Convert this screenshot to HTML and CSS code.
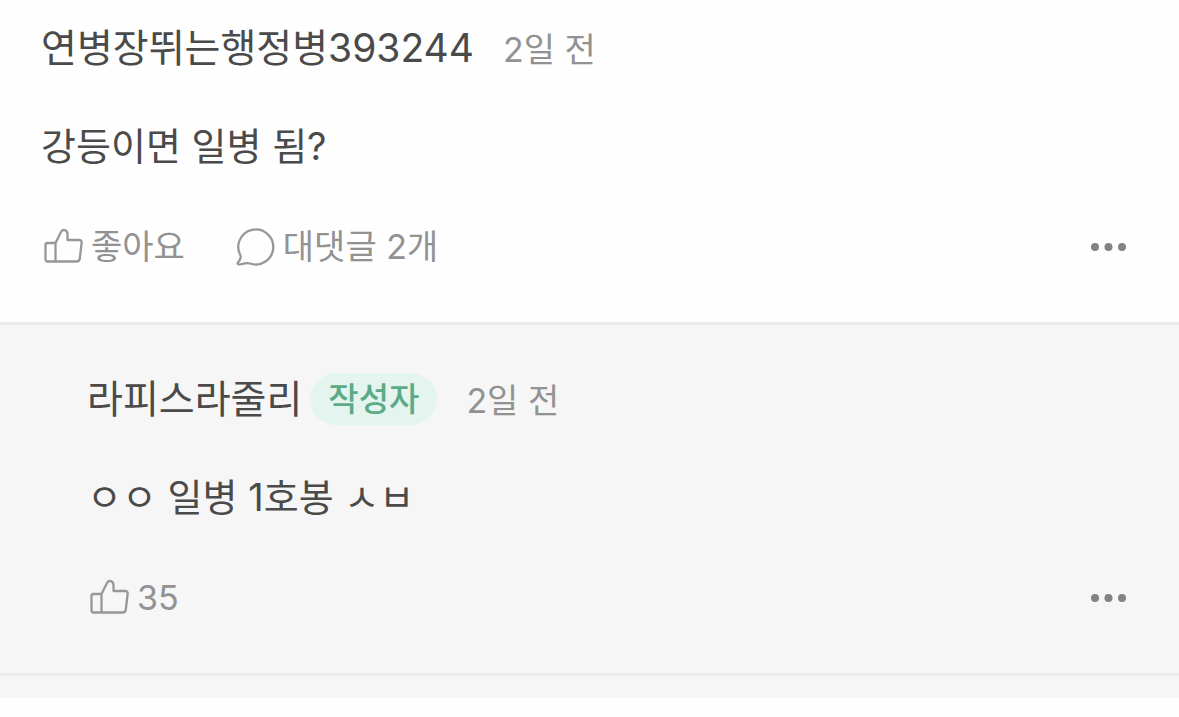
FILE: index.html
```html
<!DOCTYPE html>
<html lang="ko">
<head>
    <meta charset="UTF-8">
    <meta name="viewport" content="width=device-width, initial-scale=1.0">
    <title>댓글</title>
    <link rel="stylesheet" href="styles.css">
</head>
<body>

    <!-- 댓글 -->
    <article class="comment">
        <div class="comment-header">
            <span class="nickname">연병장뛰는행정병393244</span>
            <span class="time">2일 전</span>
        </div>
        <p class="comment-text">강등이면 일병 됨?</p>
        <div class="actions">
            <button class="action" type="button">
                <svg class="icon" viewBox="0 0 40 40">
                    <path d="M12.500 16v18.500M4.500 16h8L18 5c1.500-3.500 6.500-2 6.500 2v6h11.500q3 0 2.600 3l-1.800 15.500q-.4 3-3.300 3H4.500q-2 0-2-2V18q0-2 2-2z"/>
                </svg>
                좋아요
            </button>
            <button class="action" type="button">
                <svg class="icon" viewBox="0 0 40 40">
                    <path d="M5.500 28.500A17.500 17.500 0 1 1 15 36.500c-3-1-4.500-.5-6.500.2-2 .6-4 .8-5.300.5-.8-.2-.8-1-.3-1.600 1.900-2.100 3.400-4.600 2.600-7.100z"/>
                </svg>
                대댓글 2개
            </button>
            <button class="more" type="button" aria-label="더보기">
                <svg viewBox="0 0 36 10">
                    <circle cx="4" cy="5" r="4"/>
                    <circle cx="17.500" cy="5" r="4"/>
                    <circle cx="31" cy="5" r="4"/>
                </svg>
            </button>
        </div>
    </article>

    <!-- 대댓글 -->
    <article class="comment reply">
        <div class="comment-header">
            <span class="nickname">라피스라줄리</span>
            <span class="badge">작성자</span>
            <span class="time">2일 전</span>
        </div>
        <p class="comment-text">ㅇㅇ 일병 1호봉 ㅅㅂ</p>
        <div class="actions">
            <button class="action" type="button">
                <svg class="icon" viewBox="0 0 40 40">
                    <path d="M12.500 16v18.500M4.500 16h8L18 5c1.500-3.500 6.500-2 6.500 2v6h11.500q3 0 2.600 3l-1.800 15.500q-.4 3-3.300 3H4.500q-2 0-2-2V18q0-2 2-2z"/>
                </svg>
                35
            </button>
            <button class="more" type="button" aria-label="더보기">
                <svg viewBox="0 0 36 10">
                    <circle cx="4" cy="5" r="4"/>
                    <circle cx="17.500" cy="5" r="4"/>
                    <circle cx="31" cy="5" r="4"/>
                </svg>
            </button>
        </div>
    </article>
    <div class="reply-end"></div>

</body>
</html>
```
FILE: styles.css
```css
body {
    margin: 0;
    background: #fefefe;
    color: #4a4a4a;
    font-family: Inter, "Noto Sans CJK KR", sans-serif;
}

/* 댓글 */
.comment {
    padding: 21px 52px 53px 41px;
    border-bottom: 3px solid #ebebeb;
}

.comment-header {
    display: flex;
    align-items: center;
    height: 54px;
}

.nickname {
    font-size: 39px;
    line-height: 54px;
}

.time {
    margin-left: 29px;
    padding-top: 4px;
    color: #929292;
    font-size: 34px;
    line-height: 44px;
}

.comment-text {
    margin: 44px 0 52px;
    font-size: 38px;
    line-height: 54px;
}

/* 작성자 표시 */
.badge {
    margin-left: 8px;
    padding: 0 18px;
    border-radius: 26px;
    background: #e4f4ee;
    color: #5bab88;
    font-size: 33px;
    font-weight: 500;
    line-height: 52px;
}

/* 버튼 영역 */
.actions {
    display: flex;
    align-items: center;
    gap: 48px;
    height: 44px;
}

.action,
.more {
    display: flex;
    align-items: center;
    padding: 0;
    border: 0;
    background: none;
    color: #929292;
    font-family: inherit;
    font-size: 34px;
    line-height: 44px;
    cursor: pointer;
}

.action {
    gap: 8px;
}

.icon {
    width: 40px;
    height: 40px;
    margin-left: 2px;
    fill: none;
    stroke: #979797;
    stroke-width: 2.3;
    stroke-linejoin: round;
    stroke-linecap: round;
}

.more {
    margin-left: auto;
}

.more svg {
    width: 36px;
    height: 10px;
    fill: #828282;
}

/* 대댓글 */
.reply {
    padding-top: 47px;
    padding-left: 87px;
    background: #f6f6f6;
}

.reply-end {
    height: 22px;
    background: #f6f6f6;
}
```
